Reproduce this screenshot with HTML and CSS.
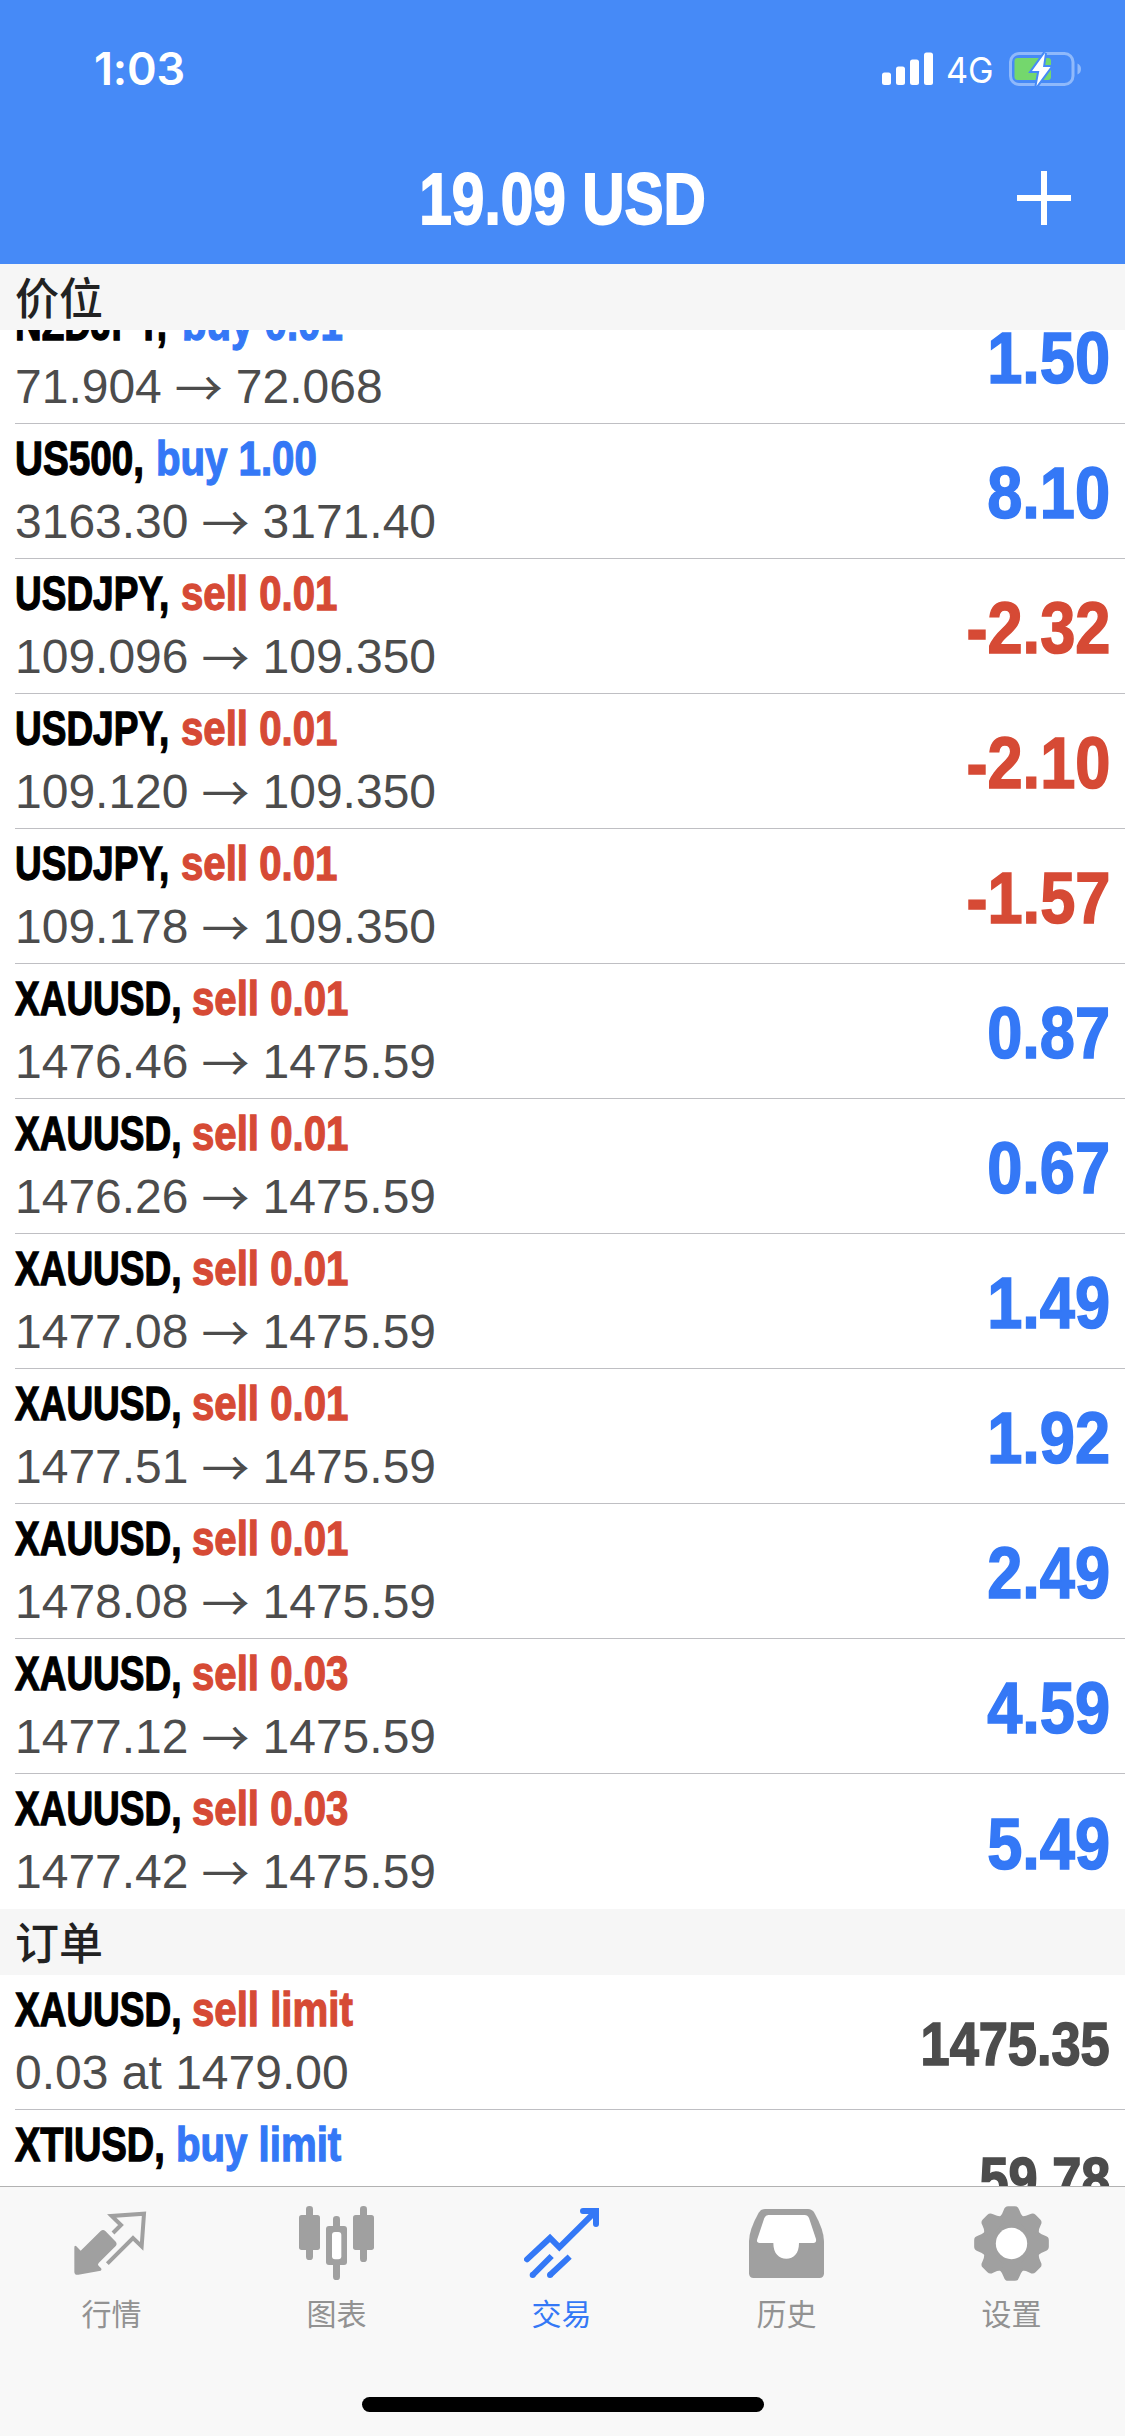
FILE: index.html
```html
<!DOCTYPE html>
<html lang="zh-CN">
<head>
<meta charset="utf-8">
<title>交易</title>
<link rel="stylesheet" href="styles.css">
</head>
<body>
<div class="screen">
  <header class="header">
    <div class="status">
      <span class="time">1:03</span>
      <div class="status-right">
        <svg class="signal" width="52" height="34" viewBox="0 0 52 34" fill="#fff"><rect x="0" y="20.5" width="9" height="12.5" rx="2.5"/><rect x="14" y="14.5" width="9" height="18.500" rx="2.500"/><rect x="28" y="7.500" width="9" height="25.500" rx="2.500"/><rect x="42" y="0.500" width="9" height="32.500" rx="2.500"/></svg>
        <span class="network">4G</span>
        <svg class="battery" width="76" height="38" viewBox="0 0 76 38"><rect x="2.500" y="3.500" width="62.500" height="31" rx="8.500" fill="none" stroke="#8fb9fb" stroke-width="3"/><path d="M69.500 13.500q3.500 1.500 3.500 5.500t-3.500 5.500z" fill="#8fb9fb"/><rect x="6.500" y="8" width="36.500" height="22" rx="3" fill="#74d76d"/><path d="M37 3 24 21h7.300L28.500 36 42.500 17H35z" fill="#fff" stroke="#468af7" stroke-width="4" paint-order="stroke"/></svg>
      </div>
    </div>
    <div class="navbar">
      <h1 class="balance"><span>19.09 USD</span></h1>
      <svg class="plus" width="54" height="54" viewBox="0 0 54 54" stroke="#fff" stroke-width="6"><path d="M0 27h54M27 0v54"/></svg>
    </div>
  </header>

  <main class="list">
    <h2 class="section section-top">价位</h2>
    <div class="positions">
      <div class="row"><div class="info"><div class="title"><b class="sym nzdjpy">NZDJPY,</b><b class="side buy">buy 0.01</b></div><div class="prices">71.904<i>→</i>72.068</div></div><div class="value up">1.50</div></div>
      <div class="row"><div class="info"><div class="title"><b class="sym us500">US500,</b><b class="side buy">buy 1.00</b></div><div class="prices">3163.30<i>→</i>3171.40</div></div><div class="value up">8.10</div></div>
      <div class="row"><div class="info"><div class="title"><b class="sym usdjpy">USDJPY,</b><b class="side sell">sell 0.01</b></div><div class="prices">109.096<i>→</i>109.350</div></div><div class="value down">-2.32</div></div>
      <div class="row"><div class="info"><div class="title"><b class="sym usdjpy">USDJPY,</b><b class="side sell">sell 0.01</b></div><div class="prices">109.120<i>→</i>109.350</div></div><div class="value down">-2.10</div></div>
      <div class="row"><div class="info"><div class="title"><b class="sym usdjpy">USDJPY,</b><b class="side sell">sell 0.01</b></div><div class="prices">109.178<i>→</i>109.350</div></div><div class="value down">-1.57</div></div>
      <div class="row"><div class="info"><div class="title"><b class="sym xauusd">XAUUSD,</b><b class="side sell">sell 0.01</b></div><div class="prices">1476.46<i>→</i>1475.59</div></div><div class="value up">0.87</div></div>
      <div class="row"><div class="info"><div class="title"><b class="sym xauusd">XAUUSD,</b><b class="side sell">sell 0.01</b></div><div class="prices">1476.26<i>→</i>1475.59</div></div><div class="value up">0.67</div></div>
      <div class="row"><div class="info"><div class="title"><b class="sym xauusd">XAUUSD,</b><b class="side sell">sell 0.01</b></div><div class="prices">1477.08<i>→</i>1475.59</div></div><div class="value up">1.49</div></div>
      <div class="row"><div class="info"><div class="title"><b class="sym xauusd">XAUUSD,</b><b class="side sell">sell 0.01</b></div><div class="prices">1477.51<i>→</i>1475.59</div></div><div class="value up">1.92</div></div>
      <div class="row"><div class="info"><div class="title"><b class="sym xauusd">XAUUSD,</b><b class="side sell">sell 0.01</b></div><div class="prices">1478.08<i>→</i>1475.59</div></div><div class="value up">2.49</div></div>
      <div class="row"><div class="info"><div class="title"><b class="sym xauusd">XAUUSD,</b><b class="side sell">sell 0.03</b></div><div class="prices">1477.12<i>→</i>1475.59</div></div><div class="value up">4.59</div></div>
      <div class="row last"><div class="info"><div class="title"><b class="sym xauusd">XAUUSD,</b><b class="side sell">sell 0.03</b></div><div class="prices">1477.42<i>→</i>1475.59</div></div><div class="value up">5.49</div></div>
    </div>
    <h2 class="section">订单</h2>
    <div class="orders">
      <div class="row"><div class="info"><div class="title"><b class="sym xauusd">XAUUSD,</b><b class="side sell">sell limit</b></div><div class="prices">0.03 at 1479.00</div></div><div class="value order">1475.35</div></div>
      <div class="row"><div class="info"><div class="title"><b class="sym xtiusd">XTIUSD,</b><b class="side buy">buy limit</b></div></div><div class="value order">59.78</div></div>
    </div>
  </main>

  <nav class="tabbar">
    <div class="tabs">
      <div class="tab">
        <svg class="icon" viewBox="0 0 225 225"><path d="M80 75q7-6 14 0l32 33q4 6 0 11L74 171q-5 5 1 10 12 9 5 13l-67 12q-12 2-12-9V125q0-9 6-4l13 13z" fill="#a0a0a0"/><path d="M117 81 141 57 113 30 210 23 203 121 177 96 100 173" fill="none" stroke="#a0a0a0" stroke-width="12"/></svg>
        <span>行情</span>
      </div>
      <div class="tab">
        <svg class="icon" viewBox="0 0 225 225"><g fill="#a0a0a0"><rect x="0" y="27" width="63" height="105" rx="8"/><rect x="21" y="0" width="21" height="162" rx="10"/><rect x="162" y="27" width="63" height="105" rx="8"/><rect x="183" y="0" width="21" height="168" rx="10"/><rect x="102" y="30" width="21" height="192" rx="10"/><rect x="81" y="60" width="63" height="117" rx="9"/></g><rect x="99" y="78" width="28" height="82" rx="9" fill="#fff"/></svg>
        <span>图表</span>
      </div>
      <div class="tab active">
        <svg class="icon" viewBox="0 0 225 225" fill="none" stroke="#3478f6" stroke-width="18" stroke-linecap="round"><path d="M9 160 78 96 106 124 214 17M177 15H216V54"/><path d="M26 207 83 150M78 207 137 152" stroke-linecap="butt"/><path d="M26 207h.1M78 207h.1"/></svg>
        <span>交易</span>
      </div>
      <div class="tab">
        <svg class="icon" viewBox="0 0 225 225"><path d="M48 9H177Q189 9 196 20 225 72 225 106V202Q225 216 211 216H14Q0 216 0 202V106Q0 72 29 20 36 9 48 9Z" fill="#a0a0a0"/><path d="M58 27H167Q176 27 180 36L201 99Q203 111 193 111H150C150 143 134 158 112 158S73 143 73 111H32Q21 111 25 99L46 36Q50 27 58 27Z" fill="#fff"/></svg>
        <span>历史</span>
      </div>
      <div class="tab">
        <svg class="icon" viewBox="-112.500 -112.500 225 225"><g fill="#a0a0a0"><circle r="88"/><g id="teeth"><path id="t" d="M-35-80Q-27-88-23-101-20-112-10-112H10Q20-112 23-101 27-88 35-80L30-60H-30Z"/><use href="#t" transform="rotate(45)"/><use href="#t" transform="rotate(90)"/><use href="#t" transform="rotate(135)"/></g><use href="#teeth" transform="rotate(180)"/></g><circle r="47" fill="#fff"/></svg>
        <span>设置</span>
      </div>
    </div>
    <div class="home"></div>
  </nav>
</div>
</body>
</html>
```
FILE: styles.css
```css
* { box-sizing: border-box; margin: 0; padding: 0; }

body {
  background: #fff;
  font-family: "Liberation Sans", Arial, "Noto Sans CJK SC", sans-serif;
}

.screen {
  width: 1125px;
  height: 2436px;
  display: flex;
  flex-direction: column;
  overflow: hidden;
}

.header { height: 264px; flex: none; background: #468af7; color: #fff; }

.status {
  height: 132px;
  padding: 0 41px 0 94px;
  display: flex;
  justify-content: space-between;
}

.time {
  padding-top: 39px;
  font: 600 45px/60px Inter, sans-serif;
  letter-spacing: -.2px;
}

.status-right { display: flex; align-items: flex-start; }
.signal { margin-top: 52px; }

.network {
  width: 62px;
  margin: 45px 0 0 12px;
  font: 400 36px/50px Inter, sans-serif;
  transform: scaleX(.95);
  transform-origin: left;
}

.battery { margin-top: 50px; }

.navbar {
  height: 132px;
  display: grid;
  grid-template-columns: 1fr auto 1fr;
  align-items: center;
  padding: 0 54px;
}

.balance {
  grid-column: 2;
  width: 284px;
  padding-top: 2px;
  display: flex;
  justify-content: center;
  font-size: 73px;
  line-height: 80px;
  white-space: nowrap;
}

.balance span {
  transform: scaleX(.803);
  -webkit-text-stroke: 1.8px #fff;
}

.plus { justify-self: end; }

.list { flex: 1; min-height: 0; overflow: hidden; }

.section {
  height: 66px;
  padding-left: 15px;
  background: #f6f6f6;
  color: #222;
  font: 500 44px/64px "Noto Sans CJK SC", sans-serif;
}

.section-top { position: relative; z-index: 1; }

/* the list is scrolled, so the first row starts under the pinned heading */
.positions { margin-top: -41px; }

.row {
  height: 135px;
  margin-left: 15px;
  padding-right: 15px;
  display: flex;
  justify-content: space-between;
  border-bottom: 1px solid #bfbfc3;
}

.row.last { border-bottom: 0; }

.title {
  display: flex;
  margin-top: 3px;
  font-size: 49px;
  line-height: 63px;
  white-space: nowrap;
}

.sym, .side { transform-origin: left; -webkit-text-stroke: 1.3px currentColor; }
.sym { color: #000; }
.nzdjpy { width: 167px; transform: scaleX(.755); }
.us500 { width: 141px; transform: scaleX(.79); }
.usdjpy { width: 166px; transform: scaleX(.755); }
.xauusd { width: 177px; transform: scaleX(.755); }
.xtiusd { width: 161px; transform: scaleX(.775); }
.side { transform: scaleX(.82); }
.buy, .up { color: #3478f6; }
.sell, .down { color: #d64a35; }

.prices {
  display: flex;
  color: #4c4c4c;
  font-size: 48px;
  line-height: 64px;
  white-space: pre;
}

.prices i {
  width: 74px;
  text-align: center;
  font: 400 48px/60px "Noto Sans CJK SC", sans-serif;
}

.value {
  align-self: center;
  padding-top: 4px;
  font-size: 73px;
  font-weight: 700;
  line-height: 80px;
  transform: scaleX(.865);
  transform-origin: right;
  -webkit-text-stroke: 1.6px currentColor;
}

.order { color: #4c4c4c; font-size: 60.5px; }

.tabbar {
  height: 250px;
  flex: none;
  display: flex;
  flex-direction: column;
  align-items: center;
  background: #f8f8f8;
  border-top: 1px solid #b2b2b2;
}

.tabs { width: 1125px; height: 210px; display: flex; }

.tab {
  flex: 1;
  padding: 19px 2px 0 0;
  display: flex;
  flex-direction: column;
  align-items: center;
  color: #929292;
  font: 400 30px/44px "Noto Sans CJK SC", sans-serif;
}

.icon { width: 75px; height: 75px; margin-bottom: 9px; }
.active { color: #3478f6; }
.home { width: 402px; height: 15px; border-radius: 8px; background: #000; }
```
